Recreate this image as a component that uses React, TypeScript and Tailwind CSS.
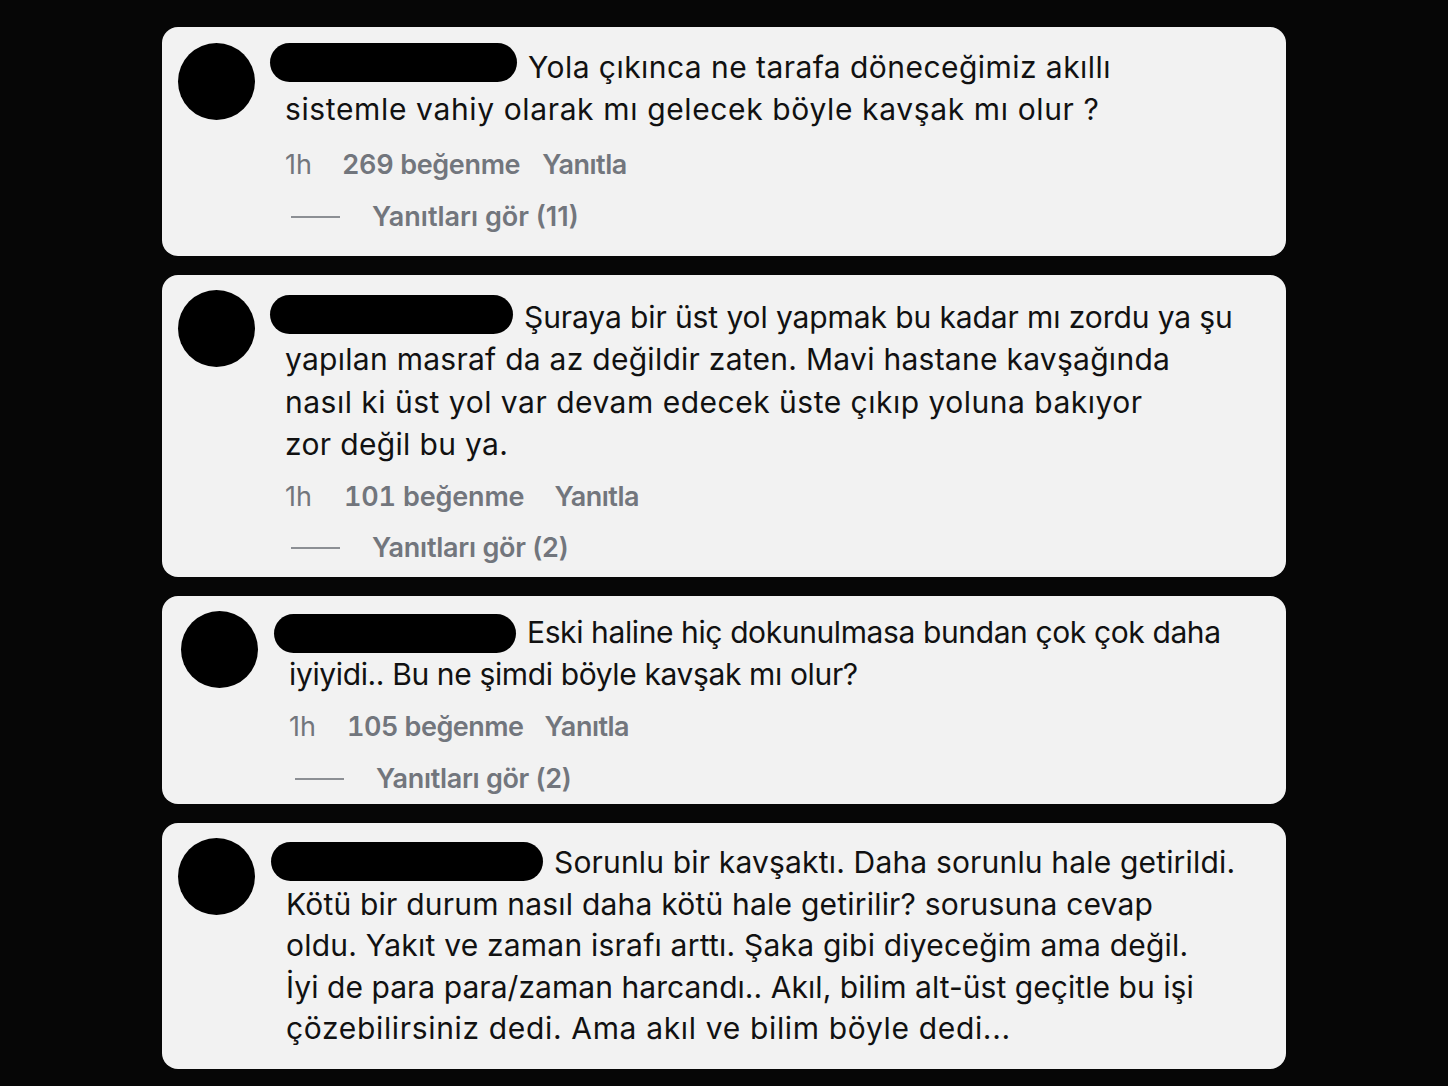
import React from "react";

type Line = [string, string];

type CardData = {
  pill: string;
  lines: Line[];
  meta?: { likes: string; replies: string; g1: string; g2: string; lt: string; rt: string };
  cardCls: string;
  avatarCls: string;
  colCls: string;
  pillCls: string;
  lead: string;
  metaCls: string;
  yanCls: string;
};

const cards: CardData[] = [
  {
    pill: "w-[247px]",
    lines: [
      ["Yola çıkınca ne tarafa döneceğimiz akıllı", "tracking-[0.45px]"],
      ["sistemle vahiy olarak mı gelecek böyle kavşak mı olur ?", "tracking-[0.63px]"],
    ],
    meta: {
      likes: "269 beğenme",
      replies: "Yanıtları gör (11)",
      g1: "ml-[30px]",
      g2: "ml-[22px]",
      lt: "tracking-[-0.35px]",
      rt: "tracking-[0px]",
    },
    cardCls: "h-[229px]",
    avatarCls: "mt-[16px] ml-[16px]",
    colCls: "pt-[19px] ml-[30px]",
    pillCls: "-translate-y-[3px]",
    lead: "leading-[42px]",
    metaCls: "mt-[14px]",
    yanCls: "mt-[10px]",
  },
  {
    pill: "w-[243px]",
    lines: [
      ["Şuraya bir üst yol yapmak bu kadar mı zordu ya şu", "tracking-[-0.1px]"],
      ["yapılan masraf da az değildir zaten. Mavi hastane kavşağında", "tracking-[0.27px]"],
      ["nasıl ki üst yol var devam edecek üste çıkıp yoluna bakıyor", "tracking-[0.5px]"],
      ["zor değil bu ya.", "tracking-[0.34px]"],
    ],
    meta: {
      likes: "101 beğenme",
      replies: "Yanıtları gör (2)",
      g1: "ml-[32px]",
      g2: "ml-[30px]",
      lt: "tracking-[-0.15px]",
      rt: "tracking-[-0.25px]",
    },
    cardCls: "h-[302px]",
    avatarCls: "mt-[15px] ml-[16px]",
    colCls: "pt-[21px] ml-[30px]",
    pillCls: "-translate-y-[1px]",
    lead: "leading-[42.3px]",
    metaCls: "mt-[11px]",
    yanCls: "mt-[9px]",
  },
  {
    pill: "w-[242px]",
    lines: [
      ["Eski haline hiç dokunulmasa bundan çok çok daha", "tracking-[-0.39px]"],
      ["iyiyidi.. Bu ne şimdi böyle kavşak mı olur?", "tracking-[-0.37px]"],
    ],
    meta: {
      likes: "105 beğenme",
      replies: "Yanıtları gör (2)",
      g1: "ml-[31px]",
      g2: "ml-[21px]",
      lt: "tracking-[-0.5px]",
      rt: "tracking-[-0.3px]",
    },
    cardCls: "h-[208px]",
    avatarCls: "mt-[15px] ml-[19px]",
    colCls: "pt-[16px] ml-[31px]",
    pillCls: "translate-y-[2px]",
    lead: "leading-[41.5px]",
    metaCls: "mt-[11px]",
    yanCls: "mt-[10px]",
  },
  {
    pill: "w-[272px]",
    lines: [
      ["Sorunlu bir kavşaktı. Daha sorunlu hale getirildi.", "tracking-[0.17px]"],
      ["Kötü bir durum nasıl daha kötü hale getirilir? sorusuna cevap", "tracking-[0.21px]"],
      ["oldu. Yakıt ve zaman israfı arttı. Şaka gibi diyeceğim ama değil.", "tracking-[0.22px]"],
      ["İyi de para para/zaman harcandı.. Akıl, bilim alt-üst geçitle bu işi", "tracking-[0.05px]"],
      ["çözebilirsiniz dedi. Ama akıl ve bilim böyle dedi...", "tracking-[0.66px]"],
    ],
    cardCls: "h-[246px]",
    avatarCls: "mt-[15px] ml-[16px]",
    colCls: "pt-[19px] ml-[31px]",
    pillCls: "translate-y-[0px]",
    lead: "leading-[41.5px]",
    metaCls: "",
    yanCls: "",
  },
];

function Card({ c }: { c: CardData }) {
  return (
    <div className={`flex w-[1124px] rounded-[16px] bg-[#f2f2f2] ${c.cardCls}`}>
      <div className={`h-[77px] w-[77px] shrink-0 rounded-full bg-black ${c.avatarCls}`} />
      <div className={`flex flex-col ${c.colCls}`}>
        {c.lines.map(([text, tr], i) => (
          <div key={i} className={`whitespace-nowrap text-[30px] text-[#111] ${c.lead} ${tr}`}>
            {i === 0 && (
              <span
                className={`-ml-[15px] mr-[11px] inline-block h-[39px] rounded-full bg-black align-top ${c.pill} ${c.pillCls}`}
              />
            )}
            {text}
          </div>
        ))}
        {c.meta && (
          <>
            <div className={`flex items-center whitespace-nowrap text-[27px] leading-[42px] text-[#72767d] ${c.metaCls}`}>
              <span className="font-normal">1h</span>
              <span className={`font-semibold tabular-nums ${c.meta.g1} ${c.meta.lt}`}>{c.meta.likes}</span>
              <span className={`font-semibold tracking-[-0.5px] ${c.meta.g2}`}>Yanıtla</span>
            </div>
            <div className={`flex items-center whitespace-nowrap text-[27px] leading-[42px] text-[#72767d] ${c.yanCls}`}>
              <span className="ml-[6px] h-[2px] w-[49px] bg-[#8c8f94]" />
              <span className={`ml-[32px] font-semibold ${c.meta.rt}`}>{c.meta.replies}</span>
            </div>
          </>
        )}
      </div>
    </div>
  );
}

export default function App() {
  return (
    <div
      className="flex min-h-[1086px] w-[1448px] flex-col gap-[19px] bg-[#060606] pl-[162px] pt-[27px]"
      style={{ fontFamily: "Inter, 'Noto Sans', sans-serif" }}
    >
      {cards.map((c, i) => (
        <Card key={i} c={c} />
      ))}
    </div>
  );
}
